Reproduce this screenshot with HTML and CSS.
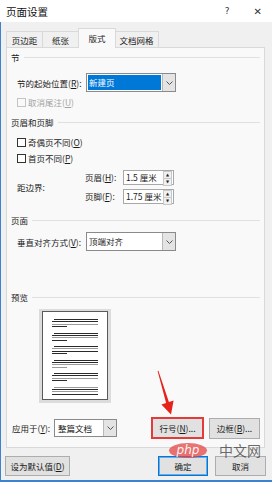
FILE: index.html
```html
<!DOCTYPE html>
<html lang="zh-CN">
<head>
    <meta charset="UTF-8">
    <title>页面设置</title>
    <link rel="stylesheet" href="styles.css">
</head>
<body>
    <div class="window">
        <div class="titlebar">
            <span class="title">页面设置</span>
            <span class="help">?</span>
            <span class="close">✕</span>
        </div>

        <div class="dialog">
            <div class="tabs">
                <div class="tab tab-margins">页边距</div>
                <div class="tab tab-paper">纸张</div>
                <div class="tab tab-active">版式</div>
                <div class="tab tab-grid">文档网格</div>
            </div>

            <div class="panel">
                <!-- 节 -->
                <div class="heading h-section">节</div>
                <div class="row row-start">
                    <span class="label">节的起始位置(<u>R</u>):</span>
                    <div class="combo combo-wide">
                        <span class="combo-value selected">新建页</span>
                        <span class="combo-btn"><svg width="7" height="4" viewBox="0 0 7 4"><path d="M0.5 0.5 L3.5 3.5 L6.5 0.5" fill="none" stroke="#555" stroke-width="1"/></svg></span>
                    </div>
                </div>
                <label class="check disabled row-endnote"><span class="box"></span>取消尾注(<u>U</u>)</label>

                <!-- 页眉和页脚 -->
                <div class="heading h-header">页眉和页脚</div>
                <label class="check row-odd"><span class="box"></span>奇偶页不同(<u>O</u>)</label>
                <label class="check row-first"><span class="box"></span>首页不同(<u>P</u>)</label>
                <div class="row row-margins">
                    <span class="label-edge">距边界:</span>
                    <div class="spins">
                        <div class="spin-row">
                            <span class="sublabel">页眉(<u>H</u>):</span>
                            <div class="spin"><span class="spin-value">1.5 厘米</span><span class="spin-btns"><i>▲</i><i>▼</i></span></div>
                        </div>
                        <div class="spin-row">
                            <span class="sublabel">页脚(<u>F</u>):</span>
                            <div class="spin"><span class="spin-value">1.75 厘米</span><span class="spin-btns"><i>▲</i><i>▼</i></span></div>
                        </div>
                    </div>
                </div>

                <!-- 页面 -->
                <div class="heading h-page">页面</div>
                <div class="row row-valign">
                    <span class="label">垂直对齐方式(<u>V</u>):</span>
                    <div class="combo combo-wide">
                        <span class="combo-value">顶端对齐</span>
                        <span class="combo-btn"><svg width="7" height="4" viewBox="0 0 7 4"><path d="M0.5 0.5 L3.5 3.5 L6.5 0.5" fill="none" stroke="#555" stroke-width="1"/></svg></span>
                    </div>
                </div>

                <!-- 预览 -->
                <div class="heading h-preview">预览</div>
                <div class="preview">
                    <div class="page">
                        <div class="para"><i class="l first"></i><i class="l"></i><i class="l gray"></i><i class="l short"></i></div>
                        <div class="para"><i class="l first"></i><i class="l"></i><i class="l gray"></i><i class="l short"></i></div>
                        <div class="para"><i class="l first"></i><i class="l gray"></i><i class="l"></i><i class="l short"></i></div>
                        <div class="para"><i class="l first"></i><i class="l"></i><i class="l gray"></i><i class="l short gray"></i></div>
                        <div class="para"><i class="l first"></i><i class="l"></i><i class="l gray"></i><i class="l short"></i></div>
                        <div class="para"><i class="l first gray"></i><i class="l"></i><i class="l gray"></i><i class="l"></i></div>
                    </div>
                </div>

                <div class="row row-apply">
                    <span class="label-apply">应用于(<u>Y</u>):</span>
                    <div class="combo combo-apply">
                        <span class="combo-value">整篇文档</span>
                        <span class="combo-btn"><svg width="7" height="4" viewBox="0 0 7 4"><path d="M0.5 0.5 L3.5 3.5 L6.5 0.5" fill="none" stroke="#555" stroke-width="1"/></svg></span>
                    </div>
                    <div class="marked"><button class="btn btn-line">行号(<u>N</u>)...</button></div>
                    <button class="btn btn-border">边框(<u>B</u>)...</button>
                </div>
            </div>

            <div class="footer">
                <button class="btn btn-default">设为默认值(<u>D</u>)</button>
                <button class="btn btn-ok">确定</button>
                <button class="btn btn-cancel">取消</button>
            </div>
        </div>
    </div>

    <!-- annotation arrow -->
    <svg class="arrow" width="272" height="484" viewBox="0 0 272 484">
        <polygon points="157.6,371 158.4,370.8 168.9,402.1 173.6,400.6 171,414.5 161.4,404.4 166.1,402.9" fill="#e6231b"/>
    </svg>

    <!-- watermark -->
    <div class="watermark">
        <span class="wm-php">php</span>
        <span class="wm-cn">中文网</span>
    </div>
</body>
</html>
```

FILE: styles.css
```css
body {
    margin: 0;
    font-family: "Noto Sans CJK SC", "Noto Sans", sans-serif;
    font-size: 8.5px;
    color: #1a1a1a;
    background: #fff;
}

u {
    text-decoration: underline;
    text-underline-offset: 1px;
}

.window {
    width: 272px;
    height: 484px;
    display: flex;
    flex-direction: column;
    overflow: hidden;
}

.titlebar {
    height: 22px;
    display: flex;
    align-items: center;
    padding-left: 6px;
    background: #fff;
    flex-shrink: 0;
}

.title {
    flex: 1;
    font-size: 10.5px;
    color: #111;
}

.help {
    font-family: "DejaVu Sans", sans-serif;
    font-size: 9px;
    color: #333;
    margin-right: 24px;
}

.close {
    font-family: "DejaVu Sans", sans-serif;
    font-size: 10px;
    color: #333;
    margin-right: 10px;
}

.dialog {
    flex: 1;
    background: #f0f0f0;
    border-left: 1px solid #3b82d0;
    border-bottom: 2px solid #3b82d0;
    margin-bottom: 2px;
    display: flex;
    flex-direction: column;
}

/* tabs */
.tabs {
    display: flex;
    align-items: flex-end;
    height: 19px;
    margin-top: 6px;
    padding-left: 5px;
}

.tab {
    height: 16px;
    line-height: 16px;
    text-align: center;
    box-sizing: border-box;
    border: 1px solid #d9d9d9;
    border-bottom: none;
    background: #f0f0f0;
}

.tab-margins { width: 37px; }
.tab-paper { width: 36px; border-left: none; }
.tab-grid { width: 44px; border-left: none; }

.tab-active {
    width: 38px;
    height: 20px;
    line-height: 18px;
    margin-bottom: -1px;
    background: #f9f9f9;
    position: relative;
    z-index: 1;
    border-left: 1px solid #d9d9d9;
    margin-left: -1px;
    margin-right: -1px;
    border-right: 1px solid #d9d9d9;
}

.panel {
    margin-left: 5px;
    width: 259px;
    height: 401px;
    box-sizing: border-box;
    border: 1px solid #d9d9d9;
    background: #f9f9f9;
    padding: 0 4px;
    display: flex;
    flex-direction: column;
}

.heading {
    display: flex;
    align-items: center;
    height: 14px;
    color: #1a1a1a;
}

.heading::after {
    content: "";
    flex: 1;
    height: 1px;
    background: #e0e0e0;
    margin-left: 4px;
}

.h-section { margin-top: 2px; }
.h-header { margin-top: 6px; }
.h-page { margin-top: 10px; }
.h-preview { margin-top: 39px; }

.row {
    display: flex;
    align-items: center;
    margin-left: 6px;
}

.row-start { height: 19px; margin-top: 9px; }
.row-valign { height: 19px; margin-top: 5px; }

.label {
    width: 69px;
    flex-shrink: 0;
}

/* combo box */
.combo {
    display: flex;
    box-sizing: border-box;
    border: 1px solid #8a8a8a;
    background: #fff;
    height: 19px;
}

.combo-wide { width: 90px; }

.combo-value {
    flex: 1;
    margin: 1px;
    padding-left: 1px;
    line-height: 15px;
    white-space: nowrap;
}

.combo-value.selected {
    background: #0078d7;
    color: #fff;
}

.combo-btn {
    width: 12px;
    background: #e4e4e4;
    border-left: 1px solid #b8b8b8;
    display: flex;
    align-items: center;
    justify-content: center;
}

/* checkboxes */
.check {
    display: flex;
    align-items: center;
    height: 14px;
    margin-left: 6px;
}

.box {
    width: 9px;
    height: 9px;
    box-sizing: border-box;
    border: 1px solid #333;
    background: #fff;
    margin-right: 2px;
}

.check.disabled {
    color: #a3a3a3;
}

.check.disabled .box {
    border-color: #c4c4c4;
    background: #f9f9f9;
}

.row-endnote { margin-top: 3px; }
.row-odd { margin-top: 6px; }
.row-first { margin-top: 2px; }

/* margins from edge */
.row-margins {
    height: 34px;
    margin-top: 4px;
    padding-top: 1px;
    box-sizing: border-box;
}

.label-edge {
    width: 68px;
    flex-shrink: 0;
}

.spins {
    display: flex;
    flex-direction: column;
    gap: 4px;
}

.spin-row {
    display: flex;
    align-items: center;
    height: 15px;
}

.sublabel {
    width: 38px;
}

.spin {
    width: 51px;
    height: 15px;
    box-sizing: border-box;
    border: 1px solid #a8a8a8;
    background: #fff;
    display: flex;
}

.spin-value {
    flex: 1;
    line-height: 13px;
    padding-left: 2px;
    white-space: nowrap;
}

.spin-btns {
    width: 9px;
    margin: 0 1px 0 0;
    display: flex;
    flex-direction: column;
}

.spin-btns i {
    flex: 1;
    font-style: normal;
    font-family: "DejaVu Sans", sans-serif;
    font-size: 4px;
    line-height: 6px;
    text-align: center;
    color: #222;
    background: #f0f0f0;
    border: 1px solid #c8c8c8;
    border-bottom: none;
}

.spin-btns i:last-child {
    border-bottom: 1px solid #c8c8c8;
}

/* preview */
.preview {
    margin-top: 5px;
    margin-left: 28px;
    width: 72px;
    height: 94px;
    box-sizing: border-box;
    background: #dcdcdc;
    padding: 2px 3px 3px 3px;
}

.page {
    height: 100%;
    box-sizing: border-box;
    border: 1px solid #5a5a5a;
    background: #fff;
    padding: 7px 0 0 9px;
    display: flex;
    flex-direction: column;
    gap: 5.5px;
}

.para {
    display: flex;
    flex-direction: column;
    gap: 1.35px;
}

.l {
    display: block;
    width: 46px;
    height: 1px;
    background: #2a2a2a;
}

.l.first {
    width: 44px;
    margin-left: 2px;
}

.l.gray {
    background: #9a9a9a;
}

.l.short {
    width: 15px;
}

/* apply row */
.row-apply {
    height: 22px;
    margin-top: 14px;
    margin-left: 1px;
}

.label-apply {
    width: 42px;
    flex-shrink: 0;
}

.combo-apply {
    width: 63px;
    height: 18px;
}

.combo-apply .combo-value {
    line-height: 14px;
    padding-left: 2px;
}

.btn {
    font-family: inherit;
    font-size: 8.5px;
    color: #1a1a1a;
    background: #e1e1e1;
    border: 1px solid #adadad;
    padding: 0;
    box-sizing: border-box;
    white-space: nowrap;
}

.marked {
    margin-left: 34px;
    width: 53px;
    height: 22px;
    box-sizing: border-box;
    border: 2px solid #e53a3a;
    display: flex;
}

.btn-line {
    flex: 1;
    border: none;
}

.btn-border {
    margin-left: 5px;
    width: 51px;
    height: 21px;
}

/* footer */
.footer {
    display: flex;
    margin-top: 8px;
    padding: 0 6px 0 4px;
}

.btn-default {
    width: 65px;
    height: 20px;
}

.btn-ok {
    margin-left: auto;
    width: 50px;
    height: 20px;
    border: 1px solid #0078d7;
    box-shadow: inset 0 0 0 1px #6aa8e6;
}

.btn-cancel {
    margin-left: 7px;
    width: 51px;
    height: 20px;
}

/* overlays */
.arrow {
    position: absolute;
    left: 0;
    top: 0;
    pointer-events: none;
}

.watermark {
    position: absolute;
    left: 169px;
    top: 443px;
    display: flex;
    align-items: center;
    pointer-events: none;
}

.wm-php {
    width: 38px;
    height: 15px;
    border-radius: 50%;
    background: rgba(228, 70, 70, 0.75);
    color: rgba(255, 255, 255, 0.95);
    font-family: "DejaVu Sans", sans-serif;
    font-style: italic;
    font-size: 12px;
    line-height: 14px;
    text-align: center;
}

.wm-cn {
    margin-left: 12px;
    font-size: 14px;
    line-height: 15px;
    color: rgba(60, 60, 60, 0.75);
}
```
